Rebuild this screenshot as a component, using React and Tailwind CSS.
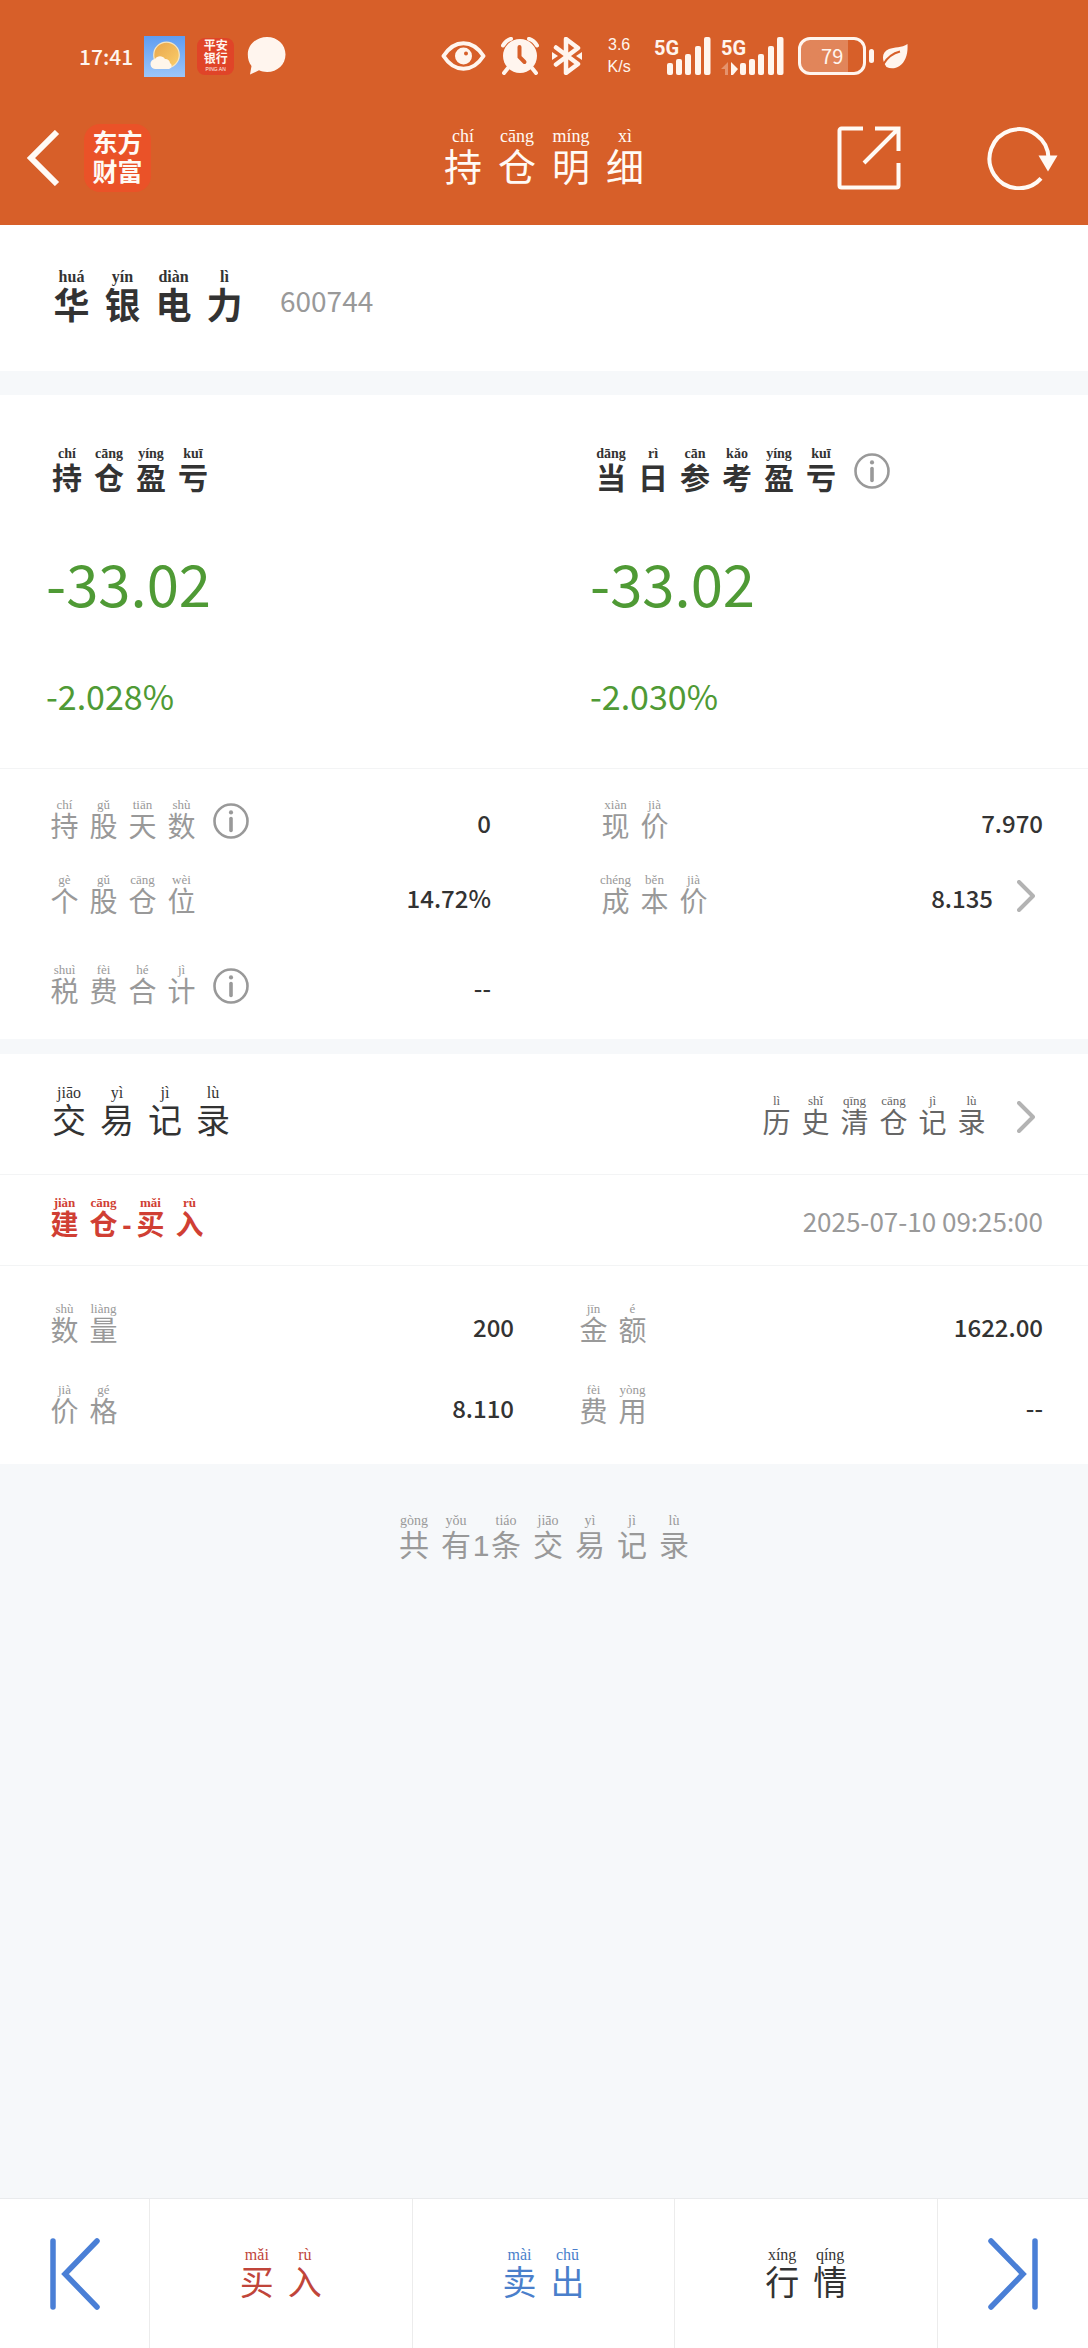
import React from 'react';

const sizes = {
  sm: { cell: 'w-[39px]', hanzi: 'text-[28px] leading-[32px]', pinyin: 'text-[13px] leading-[15px]' },
  base: { cell: 'w-[42px]', hanzi: 'text-[30px] leading-[34px]', pinyin: 'text-[14px] leading-[16px]' },
  md: { cell: 'w-[48px]', hanzi: 'text-[34px] leading-[38px]', pinyin: 'text-[16px] leading-[18px]' },
  lg: { cell: 'w-[51px]', hanzi: 'text-[36px] leading-[42px]', pinyin: 'text-[16px] leading-[18px]' },
  xl: { cell: 'w-[54px]', hanzi: 'text-[38px] leading-[44px]', pinyin: 'text-[18px] leading-[20px]' },
};

// Hanzi with pinyin on top. Characters with no reading ("-", "1") get a narrow cell.
const Pinyin = ({ text, reading, size = 'sm' }) => {
  const s = sizes[size];
  const readings = reading.split(' ');
  let next = 0;

  return (
    <span className="flex items-end font-['Liberation_Sans','Noto_Sans_CJK_SC',sans-serif]">
      {[...text].map((char, i) => {
        if (/[-\d]/.test(char)) {
          return (
            <span key={i} className={`flex w-2 justify-center ${s.hanzi}`}>{char}</span>
          );
        }
        return (
          <ruby key={i} className={`flex shrink-0 flex-col-reverse items-center ${s.cell}`}>
            <span className={s.hanzi}>{char}</span>
            <rt className={`block whitespace-nowrap font-['Liberation_Serif',serif] ${s.pinyin}`}>
              {readings[next++]}
            </rt>
          </ruby>
        );
      })}
    </span>
  );
};

const InfoIcon = () => (
  <svg className="h-9 w-9" viewBox="0 0 36 36" fill="none" stroke="#999999" strokeLinecap="round">
    <circle cx="18" cy="18" r="16.5" strokeWidth="2.6" />
    <path d="M18 15.5v12" strokeWidth="3.6" />
    <path d="M18 9.4v.1" strokeWidth="4.2" />
  </svg>
);

const InfoButton = ({ label }) => (
  <button type="button" aria-label={label} className="ml-3 shrink-0">
    <InfoIcon />
  </button>
);

const Chevron = () => (
  <svg className="h-8 w-[18px]" viewBox="0 0 18 32" fill="none" stroke="#b3b3b3" strokeWidth="4" strokeLinecap="round" strokeLinejoin="round">
    <path d="M2 2l14 14L2 30" />
  </svg>
);

const Signal = ({ data }) => (
  <svg
    className={data ? 'h-[38px] w-[63px]' : 'h-[38px] w-[57px]'}
    viewBox={data ? '0 0 63 38' : '0 0 57 38'}
    fill="#fff5ee"
  >
    <text x="0" y="18" fontSize="20" fontWeight="700" fontFamily="Roboto, sans-serif">5G</text>
    <g transform={data ? 'translate(19 0)' : 'translate(13 0)'}>
      <rect x="0" y="26" width="6" height="12" rx="2" />
      <rect x="9" y="22" width="6" height="16" rx="2" />
      <rect x="18" y="17" width="6" height="21" rx="2" />
      <rect x="28" y="9" width="6" height="29" rx="2" />
      <rect x="37" y="0" width="6.500" height="38" rx="2" />
    </g>
    {data && (
      <>
        <path d="M7 25v13H4v-6H0z" opacity=".35" />
        <path d="M10 38V25l7 7-5 6z" />
      </>
    )}
  </svg>
);

const StatusBar = () => (
  <div className="flex h-28 items-center pl-[79px] text-[#fff5ee]">
    <time className="text-[21px] leading-6 font-medium">17:41</time>

    <svg className="ml-[11px] h-[41px] w-[41px]" viewBox="0 0 41 41">
      <defs>
        <linearGradient id="sky" x1="0" y1="0" x2="0" y2="1">
          <stop offset="0" stopColor="#5f9df2" />
          <stop offset="1" stopColor="#9cc6f8" />
        </linearGradient>
        <linearGradient id="sun" x1="0" y1="0" x2="1" y2="1">
          <stop offset="0" stopColor="#e8a54c" />
          <stop offset="1" stopColor="#fbcf6a" />
        </linearGradient>
      </defs>
      <path d="M0 0h41v41H0z" fill="url(#sky)" />
      <circle cx="22.500" cy="19" r="12.800" fill="url(#sun)" stroke="#f7e6c0" strokeWidth="1.200" />
      <path d="M12 33a5 5 0 0 1-1-10 6 6 0 0 1 10 0 4.500 4.500 0 0 1 5 4 3.200 3.200 0 0 1-1 6z" fill="#fff6ea" />
    </svg>

    <div className="ml-3 flex h-[37px] w-[37px] flex-col items-center justify-center rounded-lg bg-[#e04428] font-['Liberation_Sans','Noto_Sans_CJK_SC',sans-serif] text-[12px] leading-[13px] font-bold">
      <span>平安</span>
      <span>银行</span>
      <span className="text-[5px] leading-[6px] font-normal">PING AN</span>
    </div>

    <svg className="ml-[13px] h-[38px] w-[39px]" viewBox="0 0 39 38" fill="#fff5ee">
      <path d="M20 0c10.500 0 18.500 7.500 18.500 17.500S30.500 35 20 35c-3 0-5.600-.6-8-1.700L3 37.500l1.500-8.500C2 26 .8 22 .8 17.500.8 7.500 9.500 0 20 0z" />
    </svg>

    <div className="ml-[155px] flex items-center">
      <svg className="h-[30px] w-[45px]" viewBox="0 0 45 30" fill="none" stroke="#fff5ee">
        <path d="M2.500 15C8 6.500 15 2.200 22.500 2.200S37 6.500 42.500 15C37 23.500 30 27.800 22.500 27.800S8 23.500 2.500 15z" strokeWidth="4" strokeLinejoin="round" />
        <circle cx="22.500" cy="15" r="8.500" fill="#fff5ee" stroke="none" />
        <circle cx="25" cy="12.500" r="2" fill="#d75f29" stroke="none" />
      </svg>

      <svg className="ml-[15px] h-[38px] w-[38px]" viewBox="0 0 38 38" fill="none" stroke="#fff5ee" strokeLinecap="round">
        <circle cx="19" cy="19" r="17" fill="#fff5ee" stroke="none" />
        <path d="M2 8.500C4 5 6 3 10 1.800M36 8.500C34 5 32 3 28 1.800M7 31l-4 5M31 31l4 5" strokeWidth="4" />
        <path d="M18.500 10v10l5 5" stroke="#d75f29" strokeWidth="4" />
      </svg>

      <svg className="ml-[13px] h-[38px] w-[30px]" viewBox="0 0 30 38" fill="none" stroke="#fff5ee" strokeWidth="4.500" strokeLinecap="round" strokeLinejoin="round">
        <path d="M4 10.500l22 16.500-12 9V2l12 9L4 27.500" />
        <path d="M0 15l6 4-6 4zM30 15l-6 4 6 4z" fill="#fff5ee" stroke="none" />
      </svg>

      <div className="ml-[21px] flex w-8 flex-col items-center font-['Liberation_Sans',sans-serif] text-[16px] leading-[22px]">
        <span>3.6</span>
        <span>K/s</span>
      </div>

      <div className="ml-[19px] flex gap-[10px]">
        <Signal />
        <Signal data />
      </div>

      <div className="ml-[14px] flex h-[38px] w-[68px] items-center justify-center rounded-[12px] border-[3px] border-[#fff5ee] bg-linear-to-r from-[#e1855a] from-75% to-[#d75f29] to-75% text-[20px] leading-6">
        79
      </div>
      <span className="ml-[3px] h-[14px] w-[5px] rounded-sm bg-[#fff5ee]" />

      <svg className="ml-2 h-[25px] w-[26px]" viewBox="0 0 26 25">
        <path d="M25.500 0c.6 10-2 18-8 22-4 2.700-9 3-13 1C-1 15 0 8 7 5c5-2 13-1 18.500-5z" fill="#fff5ee" />
        <path d="M1.500 20C5 14 10 9.500 18 7.500" fill="none" stroke="#d75f29" strokeWidth="2" />
      </svg>
    </div>
  </div>
);

const NavBar = () => (
  <nav className="grid h-[113px] grid-cols-[1fr_auto_1fr] items-center pb-[22px] text-[#fffaf5]">
    <div className="flex items-center pl-[26px]">
      <button type="button" aria-label="返回">
        <svg className="h-[56px] w-[34px]" viewBox="0 0 34 56" fill="none" stroke="#fffaf5" strokeWidth="6">
          <path d="M31 2L5 28l26 26" />
        </svg>
      </button>
      <div className="ml-6 flex h-[68px] w-[67px] flex-col items-center justify-center rounded-2xl bg-[#ea5228] font-['Liberation_Sans','Noto_Sans_CJK_SC',sans-serif] text-[25px] leading-[29px] font-bold">
        <span>东方</span>
        <span>财富</span>
      </div>
    </div>

    <h1><Pinyin size="xl" text="持仓明细" reading="chí cāng míng xì" /></h1>

    <div className="flex items-center justify-end gap-[86px] pr-[29px]">
      <button type="button" aria-label="分享">
        <svg className="h-16 w-[64px]" viewBox="0 0 64 64" fill="none" stroke="#fffaf5" strokeWidth="4">
          <path d="M26 2.500H4.500a2 2 0 0 0-2 2v55a2 2 0 0 0 2 2h55a2 2 0 0 0 2-2V37" />
          <path d="M38 2.500h23.500V25M61 3L27 37" />
        </svg>
      </button>
      <button type="button" aria-label="刷新">
        <svg className="h-16 w-[72px]" viewBox="0 0 72 64" fill="none" stroke="#fffaf5" strokeWidth="4">
          <path d="M54 52.400A29.500 29.500 0 1 1 61.500 32" />
          <path d="M51.500 29.500h19l-9.500 16z" fill="#fffaf5" stroke="none" />
        </svg>
      </button>
    </div>
  </nav>
);

const Profit = ({ label, reading, amount, percent, info }) => (
  <div className="pl-[46px]">
    <div className="flex items-center font-bold text-[#333333]">
      <Pinyin size="base" text={label} reading={reading} />
      {info && <InfoButton label={`${label}说明`} />}
    </div>
    <p className="mt-[54px] text-[58px] leading-[64px]">{amount}</p>
    <p className="mt-[62px] text-[34px] leading-10">{percent}</p>
  </div>
);

const Field = ({ label, reading, value, info, link }) => (
  <div className="flex h-[47px] items-center">
    <dt className="flex items-center text-[#999999]">
      <Pinyin text={label} reading={reading} />
      {info && <InfoButton label={`${label}说明`} />}
    </dt>
    <dd className="ml-auto flex items-center text-[24px] leading-8 font-medium text-[#333333]">
      <span className="pt-1">{value}</span>
      {link && (
        <a href="#cost" aria-label={`${label}详情`} className="mr-2 ml-6">
          <Chevron />
        </a>
      )}
    </dd>
  </div>
);

const App = () => {
  return (
    <div className="flex min-h-screen flex-col bg-[#f6f8fa] font-['Noto_Sans_CJK_SC',sans-serif] text-[#333333]">
      <header className="bg-[#d75f29]">
        <StatusBar />
        <NavBar />
      </header>

      <main>
        {/* Stock */}
        <section className="flex h-[146px] items-center bg-white pl-[46px]">
          <h2 className="font-bold"><Pinyin size="lg" text="华银电力" reading="huá yín diàn lì" /></h2>
          <span className="ml-[30px] pt-1 text-[28px] leading-8 text-[#999999]">600744</span>
        </section>

        {/* Profit and loss */}
        <section className="mt-6 grid grid-cols-2 border-b border-[#f3f4f5] bg-white pt-[51px] pb-[52px] text-[#4f9a35]">
          <Profit label="持仓盈亏" reading="chí cāng yíng kuī" amount="-33.02" percent="-2.028%" />
          <Profit label="当日参考盈亏" reading="dāng rì cān kǎo yíng kuī" amount="-33.02" percent="-2.030%" info />
        </section>

        {/* Position details */}
        <dl className="grid grid-cols-2 bg-white pt-7 pb-[30px]">
          <div className="flex flex-col pr-[53px] pl-[45px]">
            <Field label="持股天数" reading="chí gǔ tiān shù" value="0" info />
            <div className="mt-7">
              <Field label="个股仓位" reading="gè gǔ cāng wèi" value="14.72%" />
            </div>
            <div className="mt-[43px]">
              <Field label="税费合计" reading="shuì fèi hé jì" value="--" info />
            </div>
          </div>
          <div className="flex flex-col pr-[45px] pl-[52px]">
            <Field label="现价" reading="xiàn jià" value="7.970" />
            <div className="mt-7">
              <Field label="成本价" reading="chéng běn jià" value="8.135" link />
            </div>
          </div>
        </dl>

        {/* Trade records */}
        <section className="mt-[15px] bg-white">
          <div className="flex items-end justify-between border-b border-[#f3f4f5] pt-[30px] pr-[53px] pb-[34px] pl-[45px]">
            <h2><Pinyin size="md" text="交易记录" reading="jiāo yì jì lù" /></h2>
            <a href="#history" className="flex items-center gap-[26px] text-[#666666]">
              <Pinyin text="历史清仓记录" reading="lì shǐ qīng cāng jì lù" />
              <Chevron />
            </a>
          </div>

          <div className="flex items-center justify-between border-b border-[#f3f4f5] px-[45px] pt-5 pb-[23px]">
            <h3 className="font-bold text-[#d03f34]">
              <Pinyin text="建仓-买入" reading="jiàn cāng mǎi rù" />
            </h3>
            <time className="pt-1 text-[26px] leading-8 text-[#999999]">2025-07-10 09:25:00</time>
          </div>

          <dl className="grid grid-cols-2 gap-x-[60px] gap-y-[34px] px-[45px] pt-[35px] pb-[35px]">
            <Field label="数量" reading="shù liàng" value="200" />
            <Field label="金额" reading="jīn é" value="1622.00" />
            <Field label="价格" reading="jià gé" value="8.110" />
            <Field label="费用" reading="fèi yòng" value="--" />
          </dl>
        </section>

        <p className="mt-[49px] flex justify-center text-[#999999]">
          <Pinyin size="base" text="共有1条交易记录" reading="gòng yǒu tiáo jiāo yì jì lù" />
        </p>
      </main>

      <footer className="mt-auto grid h-[150px] grid-cols-[150px_1fr_1fr_1fr_150px] divide-x divide-[#ececec] border-t border-[#e9ebed] bg-white">
        <button type="button" aria-label="上一只" className="flex items-center justify-center">
          <svg className="h-[72px] w-[50px]" viewBox="0 0 50 72" fill="none" stroke="#4a7fd6" strokeWidth="5.500" strokeLinecap="round">
            <path d="M3 3v66M47 3L15 36l32 33" />
          </svg>
        </button>
        <button type="button" className="flex items-center justify-center text-[#c0453a]">
          <Pinyin size="md" text="买入" reading="mǎi rù" />
        </button>
        <button type="button" className="flex items-center justify-center text-[#4a7fcb]">
          <Pinyin size="md" text="卖出" reading="mài chū" />
        </button>
        <button type="button" className="flex items-center justify-center">
          <Pinyin size="md" text="行情" reading="xíng qíng" />
        </button>
        <button type="button" aria-label="下一只" className="flex items-center justify-center">
          <svg className="h-[72px] w-[50px]" viewBox="0 0 50 72" fill="none" stroke="#4a7fd6" strokeWidth="5.500" strokeLinecap="round">
            <path d="M47 3v66M3 3l32 33L3 69" />
          </svg>
        </button>
      </footer>
    </div>
  );
};

export default App;
